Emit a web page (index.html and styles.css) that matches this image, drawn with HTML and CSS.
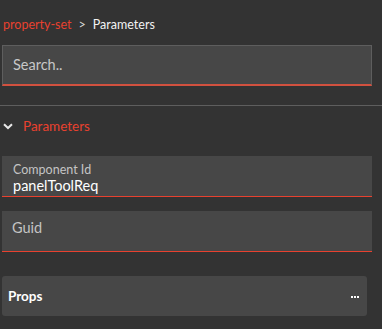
FILE: index.html
```html
<!DOCTYPE html>
<html>
<head>
<meta charset="utf-8">
<link rel="stylesheet" href="styles.css">
</head>
<body>
<div class="panel">
  <div class="crumbs"><span class="crumb-link">property-set</span><span class="crumb-sep">&gt;</span><span class="crumb-cur">Parameters</span></div>
  <div class="search">Search..</div>
  <div class="divider"></div>
  <div class="section-head">
    <svg class="chev" width="10" height="7" viewBox="0 0 10 7"><path d="M1 1.2 L5 5 L9 1.2" fill="none" stroke="#e8e8e8" stroke-width="2"/></svg>
    <span class="section-title">Parameters</span>
  </div>
  <div class="field filled">
    <div class="field-label">Component Id</div>
    <div class="field-value">panelToolReq</div>
  </div>
  <div class="field empty">
    <div class="field-placeholder">Guid</div>
  </div>
  <div class="card">
    <span class="card-title">Props</span>
    <span class="dots"><i></i><i></i><i></i></span>
  </div>
</div>
</body>
</html>
```
FILE: styles.css
```css
html, body {
  margin: 0;
  padding: 0;
  background: #333333;
}
body {
  font-family: "Lato", "Open Sans", sans-serif;
  width: 382px;
  height: 329px;
  overflow: hidden;
}
.panel {
  display: flex;
  flex-direction: column;
}
.crumbs {
  display: flex;
  align-items: center;
  gap: 6px;
  padding: 16px 0 0 3px;
  height: 18px;
  font-size: 12.5px;
  line-height: 18px;
}
.crumb-link { color: #e8412f; }
.crumb-sep { color: #d8d8d8; padding: 0 1px; }
.crumb-cur { color: #f2f2f2; }
.search {
  margin: 11px 10px 0 2px;
  height: 38px;
  box-sizing: content-box;
  border: 1px solid #5e5e5e;
  border-bottom: 2px solid #d2513f;
  background: #474747;
  color: #c8c8c8;
  font-size: 14.5px;
  line-height: 38px;
  padding-left: 10px;
}
.divider {
  margin-top: 19px;
  height: 1px;
  background: #5e5e5e;
}
.section-head {
  display: flex;
  align-items: center;
  height: 40px;
  padding-left: 3px;
}
.chev { margin-right: 10px; margin-top: 1px; }
.section-title {
  color: #e8412f;
  font-size: 13.5px;
}
.field {
  margin: 0 10px 0 2px;
  background: #474747;
  border-bottom: 1px solid #e8412f;
  height: 41px;
  box-sizing: border-box;
  padding-left: 11px;
}
.filled {
  margin-top: 10px;
  padding-top: 6px;
}
.field-label {
  color: #c4c4c4;
  font-size: 12.5px;
  line-height: 15px;
}
.field-value {
  color: #ffffff;
  font-size: 14.5px;
  line-height: 17px;
}
.empty {
  margin-top: 14px;
  padding-left: 10px;
}
.field-placeholder {
  color: #c4c4c4;
  font-size: 14.5px;
  line-height: 34px;
}
.card {
  margin: 24px 15px 0 2px;
  height: 40px;
  background: #474747;
  border-radius: 3px;
  display: flex;
  align-items: center;
  justify-content: space-between;
  padding: 0 8px 0 6px;
}
.card-title {
  color: #ffffff;
  font-size: 13.5px;
  font-weight: 700;
}
.dots {
  display: flex;
  gap: 1px;
  margin-top: 1px;
}
.dots i {
  display: block;
  width: 2px;
  height: 2px;
  background: #ffffff;
}
```
